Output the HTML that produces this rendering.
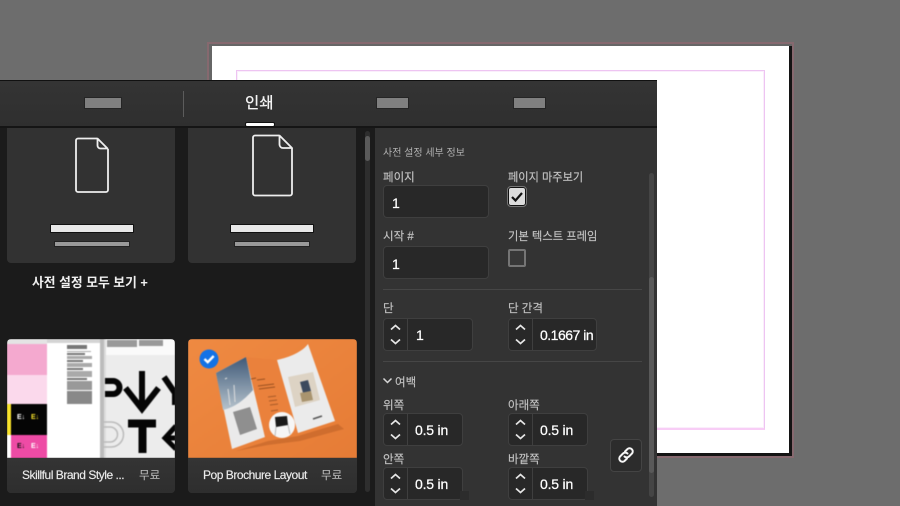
<!DOCTYPE html>
<html><head><meta charset="utf-8">
<style>
html,body{margin:0;padding:0;background:#6d6d6d}
#r{position:relative;width:900px;height:506px;overflow:hidden;background:#6d6d6d;font-family:"Liberation Sans","Noto Sans CJK KR",sans-serif;color:#fff}
#r div,#r span{position:absolute;box-sizing:border-box;white-space:nowrap}
.card{background:#323232;border-radius:0 0 4px 4px}
.ph{background:#808080;border:1px solid #252525;width:38px;height:12px}
.l{font-size:11.5px;color:#c2c2c2;line-height:14px;-webkit-text-stroke:.15px #c2c2c2}
.inp{background:#282828;border:1px solid #3f3f3f;border-radius:4px}
.v{font-size:14px;color:#fff;line-height:18px;font-weight:400;letter-spacing:-.2px;-webkit-text-stroke:.25px #fff}
.b1{height:9px;background:#e8e8e8;border:1px solid #111;border-radius:1px;width:84px}
.b2{height:6px;background:#999;border:1px solid #222;width:76px}
.st{background:#282828;border:1px solid #3f3f3f;border-radius:4px;height:33px}
.st i{position:absolute;left:23px;top:0;bottom:0;width:1px;background:#3f3f3f}
.st svg{position:absolute;left:0;top:0}
.st .v{top:7px;left:32px}
.div{height:1px;background:#464646;left:383px;width:259px}
.th{position:absolute;left:0;top:0;filter:blur(.45px)}
.nm{font-size:12px;line-height:17px;letter-spacing:-.47px;color:#ececec;-webkit-text-stroke:.15px #ececec}
.fr{font-size:11.5px;line-height:17px;color:#c0c0c0}
</style></head><body><div id="r">

<!-- document page -->
<div style="left:207px;top:42px;width:587px;height:416px;border:2px solid #86696f;background:#666"></div>
<div style="left:212px;top:46px;width:580px;height:410px;background:#141414"></div>
<div style="left:212px;top:46px;width:577px;height:407px;background:#fff"></div>
<div style="left:236px;top:70px;width:529px;height:360px;border:1px solid #eec4f2;box-shadow:inset 0 0 0 1px #faeefb;border-bottom:2px solid #f8cdf6"></div>

<!-- panel -->
<div style="left:0;top:80px;width:657px;height:426px;background:#1b1b1b;border-top:1px solid #111"></div>
<div style="left:0;top:81px;width:657px;height:45px;background:linear-gradient(#343434,#2f2f2f)"></div>
<div style="left:0;top:126px;width:657px;height:2px;background:#151515"></div>
<div class="ph" style="left:84px;top:97px"></div>
<div style="left:183px;top:91px;width:1px;height:26px;background:#5c5c5c"></div>
<div style="left:245px;top:94px;font-size:15.500px;line-height:20px;color:#f2f2f2;font-weight:500">인쇄</div>
<div style="left:245px;top:122px;width:30px;height:5px;background:#fff;border:1px solid #111;border-radius:2px"></div>
<div class="ph" style="left:376px;top:97px;width:33px"></div>
<div class="ph" style="left:513px;top:97px;width:33px"></div>

<!-- preset cards -->
<div class="card" style="left:7px;top:128px;width:168px;height:135px"></div>
<div class="card" style="left:188px;top:128px;width:168px;height:135px"></div>
<svg style="position:absolute;left:70px;top:134px" width="42" height="62" fill="none" stroke="#eee" stroke-width="1.800" stroke-linejoin="round">
<path d="M27 4.500H8a2 2 0 0 0-2 2V56a2 2 0 0 0 2 2h28a2 2 0 0 0 2-2V15"/><path d="M27.500 4.500L37.500 14.500H30.500a3 3 0 0 1-3-3z"/></svg>
<svg style="position:absolute;left:247px;top:130px" width="50" height="70" fill="none" stroke="#eee" stroke-width="1.800" stroke-linejoin="round">
<path d="M32 5.500H8a2 2 0 0 0-2 2V63.500a2 2 0 0 0 2 2h35a2 2 0 0 0 2-2V18"/><path d="M32.500 5.500L45 18H36a3.500 3.500 0 0 1-3.500-3.500z"/></svg>
<div class="b1" style="left:50px;top:224px"></div><div class="b2" style="left:54px;top:241px"></div>
<div class="b1" style="left:230px;top:224px"></div><div class="b2" style="left:234px;top:241px"></div>
<div style="left:32px;top:274px;font-size:12.800px;line-height:17px;font-weight:700;color:#f0f0f0">사전 설정 모두 보기 +</div>

<!-- left scrollbar -->
<div style="left:365px;top:131px;width:5px;height:361px;background:#2e2e2e;border-radius:3px"></div>
<div style="left:365px;top:136px;width:5px;height:25px;background:#5a5a5a;border-radius:3px"></div>

<!-- thumb 1 -->
<div style="left:7px;top:339px;width:168px;height:154px;background:#2f2f2f;border-radius:4px;overflow:hidden">
<svg class="th" width="168" height="119" font-family="Liberation Sans">
<rect width="168" height="119" fill="#fff"/>
<rect width="40" height="5" fill="#e4e4e4"/><rect x="40" width="53" height="4" fill="#d4d4d4"/>
<rect y="5" width="40" height="31" fill="#f4a9cf"/><rect y="36" width="40" height="29" fill="#fbd9ec"/>
<rect y="65" width="40" height="31" fill="#050505"/><rect y="65" width="4" height="31" fill="#f8e32a"/>
<rect y="96" width="40" height="23" fill="#ee4ba5"/><rect y="96" width="4" height="23" fill="#fff"/>
<text x="10" y="80" font-size="7" font-weight="700" fill="#fff">E↓</text><text x="24" y="80" font-size="7" font-weight="700" fill="#f8e32a">E↓</text>
<text x="10" y="109" font-size="7" font-weight="700" fill="#111">E↓</text><text x="24" y="109" font-size="7" font-weight="700" fill="#fff">E↓</text>
<g fill="#777"><rect x="60" y="6" width="20" height="4"/><rect x="60" y="12" width="24" height="1" fill="#aaa"/><rect x="60" y="14" width="18" height="2"/><rect x="60" y="17" width="25" height="3" fill="#aaa"/><rect x="60" y="21" width="16" height="2"/><rect x="60" y="24" width="25" height="4" fill="#aaa"/><rect x="60" y="29" width="16" height="2"/><rect x="60" y="32" width="25" height="6" fill="#aaa"/><rect x="60" y="39" width="20" height="2"/><rect x="60" y="42" width="25" height="9" fill="#999"/><rect x="60" y="52" width="25" height="13" fill="#888"/></g>
<rect x="93" y="0" width="4" height="119" fill="#bcbcbc"/><rect x="97" y="0" width="2" height="119" fill="#ddd"/>
<rect x="99" y="0" width="69" height="16" fill="#fafafa"/>
<rect x="99" y="16" width="69" height="103" fill="#ececec"/>
<g fill="#999"><rect x="100" y="1" width="30" height="7"/><rect x="132" y="1" width="24" height="6"/></g>
<path d="M98 42h8a6.500 6.500 0 0 1 0 13h-8" fill="none" stroke="#050505" stroke-width="6"/>
<path d="M135 32V70M118.500 49l16.500 21 16.500-21" fill="none" stroke="#050505" stroke-width="6"/>
<path d="M157 38l11 16M168 54v12" fill="none" stroke="#050505" stroke-width="6"/>
<path d="M121 84.500H149M135.500 85V114" fill="none" stroke="#050505" stroke-width="8"/>
<path d="M169 87l-11 12 11 11M158 99h11" fill="none" stroke="#050505" stroke-width="5"/>
<path d="M97 83h7a12 12 0 0 1 0 25h-7M97 88h6a7 7 0 0 1 0 15h-6" fill="none" stroke="#bbb" stroke-width="1.500"/>
</svg>
<div style="left:0;top:119px;width:168px;height:35px;background:linear-gradient(#343434,#2e2e2e)"></div>
<div class="nm" style="left:15px;top:128px">Skillful Brand Style ...</div>
<div class="fr" style="left:132px;top:129px">무료</div>
</div>

<!-- thumb 2 -->
<div style="left:188px;top:339px;width:169px;height:154px;background:#2f2f2f;border-radius:4px;overflow:hidden">
<svg class="th" width="169" height="119">
<defs><linearGradient id="o" x1="0" y1="0" x2="1" y2="1"><stop offset="0" stop-color="#ef8a42"/><stop offset="1" stop-color="#e67c36"/></linearGradient>
<linearGradient id="s" x1="0" y1="0" x2="0" y2="1"><stop offset="0" stop-color="#3f5a78"/><stop offset="1" stop-color="#b6c3cd"/></linearGradient></defs>
<rect width="169" height="119" fill="url(#o)"/>
<path d="M48 112L80 102 110 97 150 85 156 90 112 102 80 106z" fill="#b95f26" opacity=".55"/>
<path d="M28 34L58 18 77 98 44 110z" fill="#eaeaea"/>
<path d="M28 34L58 18 65 51C55 62 47 68 35 71z" fill="url(#s)"/>
<path d="M45 73L62 68 69 90 52 96z" fill="#8f8f8f"/>
<path d="M58 18L89 21 110 94 77 98z" fill="#ea813c"/>
<path d="M63 40l5-1M69 41l8-1M70 47l16-2M71 50l16-2" stroke="#9a5020" fill="none"/>
<path d="M80 58l8-1M81 62l8-1M82 66l8-1M83 72l7-1" stroke="#a85a28" fill="none"/>
<path d="M89 21C102 18 114 13 120 5L147 82 110 94z" fill="#ebebeb"/>
<path d="M100 38L125 33 132 61 107 68z" fill="#ddd3c4"/>
<path d="M112 43l8-2 3 11-8 2z" fill="#3c4a5e"/><path d="M112 54l11-2 2 9-11 2z" fill="#a9946e"/>
<path d="M125 80l9-3" stroke="#555" stroke-width="1.500" fill="none"/>
<circle cx="94" cy="86" r="13" fill="#f6f6f6"/><path d="M87 78l12-1 1 9-12 2z" fill="#1a1a1a"/>
<path d="M88 88l-1 9M100 86l2 9" stroke="#bbb" fill="none"/>
<path d="M40 50l2 16M46 46l1 17M37 40l2-1" stroke="#ddd" fill="none"/>
<circle cx="21" cy="20" r="9.500" fill="#1372e6"/>
<path d="M16.500 20l3.200 3.200 6-6.200" fill="none" stroke="#fff" stroke-width="2.400"/>
</svg>
<div style="left:0;top:119px;width:169px;height:35px;background:linear-gradient(#343434,#2e2e2e)"></div>
<div class="nm" style="left:15px;top:128px">Pop Brochure Layout</div>
<div class="fr" style="left:133px;top:129px">무료</div>
</div>

<!-- right panel -->
<div style="left:375px;top:128px;width:282px;height:378px;background:#333"></div>
<div style="left:649px;top:173px;width:5px;height:324px;background:#454545;border-radius:3px"></div>
<div style="left:649px;top:277px;width:5px;height:196px;background:#595959;border-radius:3px"></div>

<div class="l" style="left:383px;top:147px;font-size:10px;color:#b0b0b0;-webkit-text-stroke:0">사전 설정 세부 정보</div>
<div class="l" style="left:383px;top:171px">페이지</div>
<div class="l" style="left:508px;top:171px;font-size:11.200px">페이지 마주보기</div>
<div class="inp" style="left:383px;top:185px;width:106px;height:33px"></div>
<div class="v" style="left:392px;top:194px">1</div>
<div style="left:508px;top:187px;width:18px;height:19px;background:#dcdcdc;border:1px solid #111;outline:1px solid #777;border-radius:3px"></div>
<svg style="position:absolute;left:508px;top:187px" width="18" height="19"><path d="M4 10l3.500 3.500L14 6" fill="none" stroke="#111" stroke-width="2.200"/></svg>
<div class="l" style="left:383px;top:230px">시작 #</div>
<div class="l" style="left:508px;top:230px;font-size:11.300px">기본 텍스트 프레임</div>
<div class="inp" style="left:383px;top:246px;width:106px;height:33px"></div>
<div class="v" style="left:392px;top:255px">1</div>
<div style="left:508px;top:249px;width:18px;height:18px;border:2px solid #757575;border-radius:2px;background:#383838"></div>
<div class="div" style="top:289px"></div>

<div class="l" style="left:383px;top:302px">단</div>
<div class="l" style="left:508px;top:302px">단 간격</div>
<div class="st" style="left:383px;top:318px;width:90px"><i></i><svg width="23" height="31" fill="none" stroke="#e6e6e6" stroke-width="1.700"><path d="M7 10.500l4.500-4 4.500 4M7 20.500l4.500 4 4.500-4"/></svg><div class="v">1</div></div>
<div class="st" style="left:508px;top:318px;width:89px"><i></i><svg width="23" height="31" fill="none" stroke="#e6e6e6" stroke-width="1.700"><path d="M7 10.500l4.500-4 4.500 4M7 20.500l4.500 4 4.500-4"/></svg><div class="v" style="left:31px;letter-spacing:-.5px">0.1667 in</div></div>
<div class="div" style="top:361px"></div>

<svg style="position:absolute;left:382px;top:376px" width="12" height="10" fill="none" stroke="#d6d6d6" stroke-width="1.500"><path d="M1.500 2.500l4 4 4-4"/></svg>
<div class="l" style="left:395px;top:376px">여백</div>
<div class="l" style="left:383px;top:399px">위쪽</div>
<div class="l" style="left:508px;top:399px">아래쪽</div>
<div class="st" style="left:383px;top:413px;width:80px"><i></i><svg width="23" height="31" fill="none" stroke="#e6e6e6" stroke-width="1.700"><path d="M7 10.500l4.500-4 4.500 4M7 20.500l4.500 4 4.500-4"/></svg><div class="v" style="left:31px">0.5 in</div></div>
<div class="st" style="left:508px;top:413px;width:80px"><i></i><svg width="23" height="31" fill="none" stroke="#e6e6e6" stroke-width="1.700"><path d="M7 10.500l4.500-4 4.500 4M7 20.500l4.500 4 4.500-4"/></svg><div class="v" style="left:31px">0.5 in</div></div>
<div class="l" style="left:383px;top:453px">안쪽</div>
<div class="l" style="left:508px;top:453px">바깥쪽</div>
<div class="st" style="left:383px;top:467px;width:80px"><i></i><svg width="23" height="31" fill="none" stroke="#e6e6e6" stroke-width="1.700"><path d="M7 10.500l4.500-4 4.500 4M7 20.500l4.500 4 4.500-4"/></svg><div class="v" style="left:31px">0.5 in</div></div>
<div class="st" style="left:508px;top:467px;width:80px"><i></i><svg width="23" height="31" fill="none" stroke="#e6e6e6" stroke-width="1.700"><path d="M7 10.500l4.500-4 4.500 4M7 20.500l4.500 4 4.500-4"/></svg><div class="v" style="left:31px">0.5 in</div></div>
<div style="left:460px;top:491px;width:9px;height:9px;background:#2c2c2c"></div>
<div style="left:585px;top:491px;width:9px;height:9px;background:#2c2c2c"></div>

<div style="left:610px;top:439px;width:32px;height:33px;background:#2c2c2c;border:1px solid #444;border-radius:4px"></div>
<svg style="position:absolute;left:616px;top:445px" width="20" height="20" fill="none" stroke="#f6f6f6" stroke-width="2" stroke-linecap="round">
<path d="M9 6.500l2.500-2.500a3.200 3.200 0 0 1 4.500 4.500l-3 3a3.200 3.200 0 0 1-4.500 0"/>
<path d="M11 13.500l-2.500 2.500a3.200 3.200 0 0 1-4.500-4.500l3-3a3.200 3.200 0 0 1 4.500 0"/></svg>

</div></body></html>
